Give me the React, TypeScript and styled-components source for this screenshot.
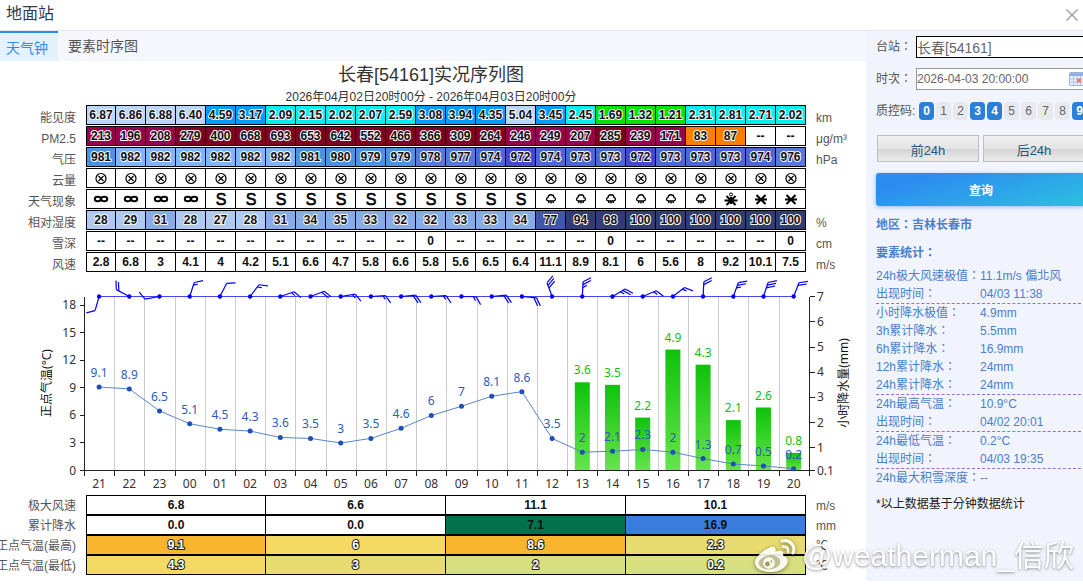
import React from 'react';
import styled, { createGlobalStyle, css } from 'styled-components';

const SANS = `"Liberation Sans", "Noto Sans CJK SC", sans-serif`;
const SANS_CENTERED = `"Liberation Sans", "Noto Sans CJK TC", sans-serif`;
const CHART = `"Noto Sans", "Noto Sans CJK SC", sans-serif`;

const GlobalStyle = createGlobalStyle`
  * { box-sizing: border-box; }
  body { margin: 0; background: #fff; font-family: ${SANS}; font-size: 12px; color: #555; overflow: hidden; }
  button, input { font-family: inherit; }
`;

/* ---------- data ---------- */

const HOURS = ['21', '22', '23', '00', '01', '02', '03', '04', '05', '06', '07', '08', '09', '10', '11', '12', '13', '14', '15', '16', '17', '18', '19', '20'];
const split = (s: string) => s.split(' ');

const visibility = split('6.87 6.86 6.88 6.40 4.59 3.17 2.09 2.15 2.02 2.07 2.59 3.08 3.94 4.35 5.04 3.45 2.45 1.69 1.32 1.21 2.31 2.81 2.71 2.02');
const pm25 = split('213 196 208 279 400 668 693 653 642 552 466 366 309 264 246 249 207 285 239 171 83 87 -- --');
const pressure = split('981 982 982 982 982 982 982 981 980 979 979 978 977 974 972 974 973 973 972 973 973 973 974 976');
const cloud = HOURS.map(() => 'x');
const weather = split('haze haze haze haze S S S S S S S S S S S rain rain rain rain rain rain sleet snow snow');
const humidity = split('28 29 31 28 27 28 31 34 35 33 32 32 33 33 34 77 94 98 100 100 100 100 100 100');
const snowDepth = split('-- -- -- -- -- -- -- -- -- -- -- 0 -- -- -- -- -- 0 -- -- -- -- -- 0');
const windSpeed = split('2.8 6.8 3 4.1 4 4.2 5.1 6.6 4.7 5.8 6.6 5.8 5.6 6.5 6.4 11.1 8.9 8.1 6 5.6 8 9.2 10.1 7.5');

const temperature = [9.1, 8.9, 6.5, 5.1, 4.5, 4.3, 3.6, 3.5, 3, 3.5, 4.6, 6, 7, 8.1, 8.6, 3.5, 2, 2.1, 2.3, 2, 1.3, 0.7, 0.5, 0.2];
const rain: Record<number, number> = { 16: 3.6, 17: 3.5, 18: 2.2, 19: 4.9, 20: 4.3, 21: 2.1, 22: 2.6, 23: 0.8 };

/* staff direction in degrees and number of half feathers */
const barbs: [number, number][] = [
  [106, 2], [-152, 4], [170, 2], [-72, 3], [-63, 2], [-53, 3], [-19, 3], [-21, 4],
  [-9, 3], [-4, 3], [-5, 4], [-4, 3], [1, 3], [-5, 4], [5, 4], [-110, 6],
  [-87, 5], [-31, 5], [-23, 3], [-38, 3], [-87, 4], [-70, 5], [-72, 6], [-69, 4],
];

const visColor = (v: string) => (+v >= 5 ? '#b8d6fa' : +v >= 3 ? '#009dfa' : +v >= 2 ? '#00f0f0' : '#00e400');
const pmColor = (v: string) => (v === '--' ? '#fff' : +v > 250 ? '#7e0023' : +v > 150 ? '#99004c' : '#ff7e00');
const prColor = (v: string) => (+v >= 982 ? '#80b4fb' : +v >= 979 ? '#4b93e0' : +v >= 976 ? '#5877da' : +v >= 973 ? '#4d68d6' : '#4549cd');
const rhColor = (v: string) => (+v < 31 ? '#afc9f0' : +v < 50 ? '#86ade8' : +v < 90 ? '#4056a8' : '#323c74');
const white = () => '#fff';

type Kind = 'value' | 'plain' | 'symbol';
const rows: { label: string; unit: string; data: string[]; color: (v: string) => string; kind: Kind }[] = [
  { label: '能见度', unit: 'km', data: visibility, color: visColor, kind: 'value' },
  { label: 'PM2.5', unit: 'μg/m³', data: pm25, color: pmColor, kind: 'value' },
  { label: '气压', unit: 'hPa', data: pressure, color: prColor, kind: 'value' },
  { label: '云量', unit: '', data: cloud, color: white, kind: 'symbol' },
  { label: '天气现象', unit: '', data: weather, color: white, kind: 'symbol' },
  { label: '相对湿度', unit: '%', data: humidity, color: rhColor, kind: 'value' },
  { label: '雪深', unit: 'cm', data: snowDepth, color: white, kind: 'plain' },
  { label: '风速', unit: 'm/s', data: windSpeed, color: white, kind: 'plain' },
];

const summary: { label: string; unit: string; outline?: boolean; cells: [string, string][] }[] = [
  { label: '极大风速', unit: 'm/s', cells: [['6.8', '#fff'], ['6.6', '#fff'], ['11.1', '#fff'], ['10.1', '#fff']] },
  { label: '累计降水', unit: 'mm', cells: [['0.0', '#fff'], ['0.0', '#fff'], ['7.1', '#00724c'], ['16.9', '#3a7ddd']] },
  { label: '正点气温(最高)', unit: '℃', outline: true, cells: [['9.1', '#f8b52d'], ['6', '#f4da63'], ['8.6', '#f8b52d'], ['2.3', '#e8db70']] },
  { label: '正点气温(最低)', unit: '℃', outline: true, cells: [['4.3', '#f4da63'], ['3', '#e8db70'], ['2', '#d8df7e'], ['0.2', '#d8df7e']] },
];

const stats: [string, string][][] = [
  [['24h极大风速极值：', '11.1m/s 偏北风'], ['出现时间：', '04/03 11:38']],
  [['小时降水极值：', '4.9mm'], ['3h累计降水：', '5.5mm'], ['6h累计降水：', '16.9mm'], ['12h累计降水：', '24mm'], ['24h累计降水：', '24mm']],
  [['24h最高气温：', '10.9°C'], ['出现时间：', '04/02 20:01']],
  [['24h最低气温：', '0.2°C'], ['出现时间：', '04/03 19:35']],
  [['24h最大积雪深度：', '--']],
];

/* ---------- styled parts ---------- */

const Page = styled.div`
  position: relative;
  min-height: 100vh;
  display: flex;
  flex-direction: column;
  overflow: hidden;
`;
const Header = styled.header`
  display: flex;
  align-items: center;
  justify-content: space-between;
  height: 31px;
  padding: 0 5px 2px 6px;
  border-bottom: 1px solid #e4e7ee;
`;
const DialogTitle = styled.h1`
  margin: 0;
  font-size: 16px;
  line-height: 26px;
  font-weight: 400;
  color: #2f3a52;
`;
const CloseButton = styled.button`
  display: flex;
  padding: 0;
  border: 0;
  background: none;
  margin-top: 1px;
`;
const Body = styled.div`
  flex: 1;
  display: flex;
`;
const Main = styled.main`
  flex: 1;
  min-width: 0;
  overflow: hidden;
`;
const TabBar = styled.nav`
  display: flex;
  height: 30px;
  background: #f5f7fc;
`;
const Tab = styled.button<{ $active?: boolean }>`
  border: 0;
  border-top: 2px solid transparent;
  padding: 0 10px 2px;
  background: none;
  font-size: 14px;
  line-height: 26px;
  color: #555;
  ${(p) => p.$active && css`
    padding: 2px 10px 0 6px;
    border-top-color: #2d8cf0;
    background: #e4f1fe;
    color: #2d8cf0;
  `}
`;
const ChartTitle = styled.h2`
  margin: 0;
  padding: 1px 4px 0 0;
  font-size: 18px;
  line-height: 26px;
  font-weight: 400;
  text-align: center;
  color: #333;
`;
const ChartSubtitle = styled.p`
  margin: 2px 4px 0 0;
  line-height: 14px;
  text-align: center;
  color: #333;
`;
const DataTable = styled.table<{ $gap: number }>`
  table-layout: fixed;
  width: calc(100% + 10px);
  margin-left: -10px;
  border-collapse: separate;
  border-spacing: 0 ${(p) => p.$gap}px;
`;
const LabelCol = styled.col`
  width: 96px;
`;
const UnitCol = styled.col`
  width: 60px;
`;
const sideText = css<{ $low?: boolean }>`
  padding-top: ${(p) => (p.$low ? 6 : 2)}px;
  padding-bottom: 0;
  line-height: ${(p) => (p.$low ? 14 : 18)}px;
`;
const RowLabel = styled.th<{ $low?: boolean }>`
  ${sideText}
  padding-left: 0;
  padding-right: 10px;
  font-weight: 400;
  text-align: right;
  white-space: nowrap;
`;
const Unit = styled.td<{ $low?: boolean }>`
  ${sideText}
  padding-left: 10px;
  padding-right: 0;
`;
const outlined = (c: string) => css`
  -webkit-text-stroke: 2px ${c};
  paint-order: stroke fill;
`;
const Cell = styled.td<{ $bg: string; $halo?: string; $light?: boolean }>`
  height: 20px;
  padding: 0;
  border: 1px solid #000;
  border-left-width: 0;
  background: ${(p) => p.$bg};
  color: ${(p) => (p.$light ? '#fff' : '#111')};
  font-weight: 700;
  line-height: 18px;
  text-align: center;
  ${(p) => p.$halo && outlined(p.$halo)}
  th + & { border-left-width: 1px; }
  svg { display: block; margin: 0 auto; }
`;
const Chart = styled.svg`
  display: block;
  width: 100%;
  font-family: ${CHART};
  font-size: 12px;
`;

const Sidebar = styled.aside`
  flex: 0 0 217px;
  overflow: hidden;
  padding: 5px 0 0 10px;
  margin-bottom: 3px;
  background: #f1f4fc;
  font-family: ${SANS_CENTERED};
`;
const Panel = styled.form`
  width: 210px;
`;
const Field = styled.div`
  display: flex;
  align-items: center;
  margin-bottom: 10px;
`;
const FieldLabel = styled.label`
  flex: 0 0 40px;
  line-height: 18px;
  white-space: nowrap;
`;
const FieldBox = styled.div<{ $strong?: boolean }>`
  flex: 1;
  min-width: 0;
  display: flex;
  align-items: center;
  height: 22px;
  border: 1px solid ${(p) => (p.$strong ? '#000' : '#999')};
  background: #fff;
`;
const TextInput = styled.input<{ $size: number }>`
  flex: 1;
  min-width: 0;
  height: 18px;
  padding: 0;
  border: 0;
  outline: 0;
  background: none;
  font-size: ${(p) => p.$size}px;
  color: #666;
`;
const CodeRow = styled.div`
  display: flex;
  align-items: center;
  height: 22px;
  gap: 2px;
`;
const CodeLabel = styled.span`
  flex: 0 0 41px;
  line-height: 18px;
`;
const Code = styled.button<{ $on: boolean }>`
  flex: 0 0 15px;
  height: 18px;
  padding: 0;
  border: 0;
  border-radius: 4px;
  font-size: 12px;
  line-height: 18px;
  font-weight: ${(p) => (p.$on ? 700 : 400)};
  color: ${(p) => (p.$on ? '#fff' : '#666')};
  background: ${(p) => (p.$on ? '#2b7fd6' : '#e7e9ef')};
`;
const StepRow = styled.div`
  display: flex;
  gap: 4px;
  margin: 13px 0 11px 1px;
`;
const StepButton = styled.button`
  flex: 0 0 102px;
  height: 27px;
  padding: 2px 0 0;
  border: 1px solid #bfbfbf;
  background: linear-gradient(#f0f0f0 0, #e4e4e4 50%, #d2d2d2 50%, #ececec 100%);
  font-size: 13px;
  color: #1d5a80;
`;
const QueryButton = styled.button`
  display: block;
  width: 100%;
  height: 33px;
  border: 0;
  border-radius: 3px;
  background: linear-gradient(165deg, #2d8cf0 20%, #2bc0e0 100%);
  box-shadow: 0 1px 4px rgba(45, 140, 240, 0.5);
  font-size: 12px;
  font-weight: 700;
  color: #fff;
`;
const StatHeading = styled.h3`
  margin: 10px 0 0;
  font-size: 12px;
  line-height: 18px;
  color: #4a80cc;
`;
const StatList = styled.div`
  margin: 5px 5px 0 0;
`;
const StatGroup = styled.dl`
  display: grid;
  grid-template-columns: 104px 1fr;
  margin: 0;
  line-height: 18px;
  color: #4a80cc;
  white-space: nowrap;
  &:not(:last-child) { border-bottom: 1px dashed #a06cc8; }
  dd { margin: 0; }
`;
const Footnote = styled.p`
  margin: 8px 0 0;
  line-height: 18px;
  color: #222;
`;
const Watermark = styled.div`
  position: absolute;
  right: 9px;
  bottom: 8px;
  display: flex;
  align-items: center;
  gap: 6px;
  font-size: 30px;
  line-height: 40px;
  color: #fff;
  text-shadow: 0 1px 3px rgba(0, 0, 0, 0.5);
  opacity: 0.9;
  pointer-events: none;
  svg { filter: drop-shadow(0 1px 2px rgba(0, 0, 0, 0.5)); }
`;

/* ---------- symbols ---------- */

const Symbol = ({ name }: { name: string }) => {
  const box = { width: 18, height: 18, viewBox: '0 0 18 18', fill: 'none', stroke: '#000' };
  switch (name) {
    case 'x':
      return (
        <svg {...box} strokeWidth="1.200">
          <circle cx="9" cy="9.500" r="5" />
          <path d="M6.500 7l5 5M11.500 7l-5 5" />
        </svg>
      );
    case 'haze':
      return (
        <svg {...box} strokeWidth="2">
          <ellipse cx="5.800" cy="9" rx="3" ry="2.200" />
          <ellipse cx="12.200" cy="9" rx="3" ry="2.200" />
        </svg>
      );
    case 'rain':
      return (
        <svg {...box} strokeWidth="1.300">
          <path d="M6.500 10.800C4 10.800 3.800 8 6 7.600C6 3.800 12 3.800 12 7.600C14.200 8 14 10.800 11.500 10.800Z" />
          <path d="M6.800 11v2M9 11v2.500M11.200 11v2" strokeWidth="1.500" />
        </svg>
      );
    case 'sleet':
      return (
        <svg {...box} strokeWidth="2">
          <circle cx="9" cy="4.500" r="1.500" strokeWidth="1" />
          <path d="M2.500 10.500h13M4.500 6l9 9M13.500 6l-9 9M9 7v7" />
        </svg>
      );
    case 'snow':
      return (
        <svg {...box} strokeWidth="2">
          <path d="M3 9.500h12M4.500 5l9 9M13.500 5l-9 9" />
        </svg>
      );
    default:
      return (
        <svg {...box}>
          <text x="9" y="15" textAnchor="middle" fontFamily={SANS} fontSize="16" fontWeight="400" fill="#000" stroke="#000" strokeWidth="0.600">{name}</text>
        </svg>
      );
  }
};

const WeiboLogo = () => (
  <svg width="42" height="34" viewBox="0 0 42 34" fill="none">
    <path fill="#fff" d="M15 9C19 6.500 22.500 8 21.500 12.500C27 10.500 30.500 12 29 16.500C33 18 35 21 33 25C30 31 22 33.500 15 33C7 32.500 1 29 1 23.500C1 18.500 8 12 15 9Z" />
    <ellipse cx="15.500" cy="23.500" rx="11" ry="7" fill="#b0ab78" opacity=".8" transform="rotate(-7 15 23)" />
    <circle cx="15" cy="24" r="5.800" fill="#fff" />
    <circle cx="13.500" cy="25" r="2.400" fill="#98935f" />
    <circle cx="17.500" cy="22.500" r="1" fill="#98935f" />
    <path d="M28 2C36 0 42 7 39 14" stroke="#fff" strokeWidth="3" strokeLinecap="round" />
    <path d="M29 7.500C32.500 7 35 10 34 13" stroke="#fff" strokeWidth="2.500" strokeLinecap="round" />
  </svg>
);

const CalendarIcon = () => (
  <svg width="16" height="16" viewBox="0 0 16 16">
    <rect x="0.500" y="1.500" width="15" height="13" rx="1" fill="#e8effb" stroke="#9db4dc" />
    <rect x="1" y="2" width="14" height="3" fill="#8fb0e6" />
    <path d="M4.500 5v9M8 5v9M11.500 5v9M1 8h14M1 11h14" stroke="#b4c6e6" />
    <rect x="8" y="7.500" width="4" height="4" fill="#e8855c" />
  </svg>
);

/* ---------- chart ---------- */

const LEFT = 84.5;
const STEP = 30.2;
const RIGHT = 809.5;
const TOP = 296.5;
const BASE = 470.5;
const px = (i: number) => LEFT + STEP * (i + 0.5) - 0.5;
const tempY = (v: number) => BASE - v * 9.17;
const rainY = (v: number) => BASE - (v - 0.1) * 25.2;

const Barb = ({ x, angle, halves }: { x: number; angle: number; halves: number }) => {
  const feathers: React.ReactNode[] = [];
  for (let left = halves, at = 14.7; left > 0; left -= 2, at -= 2.8) {
    const len = left > 1 ? 9 : 4.5;
    feathers.push(<path key={at} d={`M${at} 0l${len * 0.5} ${len * 0.866}`} />);
  }
  return (
    <g transform={`translate(${x} ${TOP}) rotate(${angle})`} stroke="#00f" strokeWidth="1.200" fill="none">
      <path d="M0 0H14.700" />
      {feathers}
      <circle r="2.200" fill="#00f" stroke="none" />
    </g>
  );
};

const SeriesChart = () => (
  <Chart viewBox="0 273 866 222" role="img" aria-label="正点气温与小时降水量">
    <defs>
      <linearGradient id="rain" x1="0" y1="0" x2="0" y2="1">
        <stop offset="0" stopColor="#0fc20c" />
        <stop offset="1" stopColor="#66e44c" />
      </linearGradient>
    </defs>
    <g shapeRendering="crispEdges" stroke="#ccc">
      {HOURS.slice(1).map((h, i) => (
        <path key={h} d={`M${Math.floor(LEFT + STEP * (i + 1)) + 0.5} ${TOP}V${BASE}`} />
      ))}
    </g>
    {Object.entries(rain).map(([i, v]) => (
      <g key={i}>
        <rect x={px(+i) - 7.5} y={rainY(v)} width="15" height={BASE - rainY(v)} fill="url(#rain)" />
        <text x={px(+i)} y={rainY(v) - 8} textAnchor="middle" fill="#10c010">{v}</text>
      </g>
    ))}
    <g shapeRendering="crispEdges" stroke="#222" fill="none">
      <path d={`M${LEFT} ${TOP}V${BASE}H${RIGHT}V${TOP}`} />
      {Array.from({ length: 25 }, (_, i) => (
        <path key={i} d={`M${Math.floor(LEFT + STEP * i) + 0.5} ${BASE}v5`} />
      ))}
      {[0, 3, 6, 9, 12, 15, 18].map((v) => <path key={v} d={`M${LEFT} ${Math.round(tempY(v) - 0.5) + 0.5}h-5`} />)}
      {[0.1, 1, 2, 3, 4, 5, 6, 7].map((v) => <path key={v} d={`M${RIGHT} ${Math.round(rainY(v) - 0.5) + 0.5}h5`} />)}
    </g>
    <g fill="#333">
      {[0, 3, 6, 9, 12, 15, 18].map((v) => <text key={v} x="76" y={tempY(v) + 4} textAnchor="end">{v}</text>)}
      {[0.1, 1, 2, 3, 4, 5, 6, 7].map((v) => <text key={v} x="817" y={rainY(v) + 4} textAnchor="start">{v}</text>)}
      {HOURS.map((h, i) => <text key={h} x={px(i)} y="488" textAnchor="middle">{h}</text>)}
    </g>
    <text transform="translate(51 383) rotate(-90)" textAnchor="middle" fill="#111">正点气温(°C)</text>
    <text transform="translate(848 383) rotate(-90)" textAnchor="middle" fill="#111">小时降水量(mm)</text>
    <polyline points={temperature.map((v, i) => `${px(i)},${tempY(v)}`).join(' ')} fill="none" stroke="#5b84cc" />
    {temperature.map((v, i) => (
      <g key={i} fill="#1e50b4">
        <circle cx={px(i)} cy={tempY(v)} r="2.500" />
        <text x={px(i)} y={tempY(v) - 10} textAnchor="middle" fill="#2f5cb8">{v}</text>
      </g>
    ))}
    <path d={`M${px(0)} ${TOP}H${px(23)}`} stroke="#4646f5" />
    {barbs.map(([angle, halves], i) => <Barb key={i} x={px(i)} angle={angle} halves={halves} />)}
  </Chart>
);

/* ---------- page ---------- */

export default function App() {
  return (
    <Page>
      <GlobalStyle />
      <Header>
        <DialogTitle>地面站</DialogTitle>
        <CloseButton aria-label="关闭">
          <svg width="12" height="12" viewBox="0 0 12 12" stroke="#999" strokeWidth="1.200">
            <path d="M0.500 0.500l11 11M11.500 0.500l-11 11" />
          </svg>
        </CloseButton>
      </Header>
      <Body>
        <Main>
          <TabBar>
            <Tab $active>天气钟</Tab>
            <Tab>要素时序图</Tab>
          </TabBar>
          <ChartTitle>长春[54161]实况序列图</ChartTitle>
          <ChartSubtitle>2026年04月02日20时00分 - 2026年04月03日20时00分</ChartSubtitle>
          <DataTable $gap={1}>
            <colgroup>
              <LabelCol />
              {HOURS.map((h) => <col key={h} />)}
              <UnitCol />
            </colgroup>
            <tbody>
              {rows.map((r) => (
                <tr key={r.label}>
                  <RowLabel scope="row" $low>{r.label}</RowLabel>
                  {r.data.map((v, i) => (
                    <Cell key={i} $bg={r.color(v)} $halo={r.kind === 'value' ? '#f4f4f8' : undefined}>
                      {r.kind === 'symbol' ? <Symbol name={v} /> : v}
                    </Cell>
                  ))}
                  <Unit $low>{r.unit}</Unit>
                </tr>
              ))}
            </tbody>
          </DataTable>
          <SeriesChart />
          <DataTable $gap={0}>
            <colgroup>
              <LabelCol />
              {summary.map((r) => <col key={r.label} />)}
              <UnitCol />
            </colgroup>
            <tbody>
              {summary.map((r) => (
                <tr key={r.label}>
                  <RowLabel scope="row">{r.label}</RowLabel>
                  {r.cells.map(([v, bg], i) => (
                    <Cell key={i} $bg={bg} $light={r.outline} $halo={r.outline ? '#222' : undefined}>{v}</Cell>
                  ))}
                  <Unit>{r.unit}</Unit>
                </tr>
              ))}
            </tbody>
          </DataTable>
        </Main>
        <Sidebar>
          <Panel onSubmit={(e) => e.preventDefault()}>
            <Field>
              <FieldLabel htmlFor="station">台站：</FieldLabel>
              <FieldBox $strong>
                <TextInput id="station" $size={14} defaultValue="长春[54161]" />
              </FieldBox>
            </Field>
            <Field>
              <FieldLabel htmlFor="time">时次：</FieldLabel>
              <FieldBox>
                <TextInput id="time" $size={12} defaultValue="2026-04-03 20:00:00" />
                <CalendarIcon />
              </FieldBox>
            </Field>
            <CodeRow>
              <CodeLabel>质控码:</CodeLabel>
              {[0, 1, 2, 3, 4, 5, 6, 7, 8, 9].map((n) => (
                <Code key={n} type="button" $on={[0, 3, 4, 9].includes(n)}>{n}</Code>
              ))}
            </CodeRow>
            <StepRow>
              <StepButton type="button">前24h</StepButton>
              <StepButton type="button">后24h</StepButton>
            </StepRow>
            <QueryButton type="submit">查询</QueryButton>
            <StatHeading>地区：吉林长春市</StatHeading>
            <StatHeading>要素统计：</StatHeading>
            <StatList>
              {stats.map((group, g) => (
                <StatGroup key={g}>
                  {group.map(([k, v]) => (
                    <React.Fragment key={k}>
                      <dt>{k}</dt>
                      <dd>{v}</dd>
                    </React.Fragment>
                  ))}
                </StatGroup>
              ))}
            </StatList>
            <Footnote>*以上数据基于分钟数据统计</Footnote>
          </Panel>
        </Sidebar>
      </Body>
      <Watermark>
        <WeiboLogo />
        <span>@weatherman_信欣</span>
      </Watermark>
    </Page>
  );
}
